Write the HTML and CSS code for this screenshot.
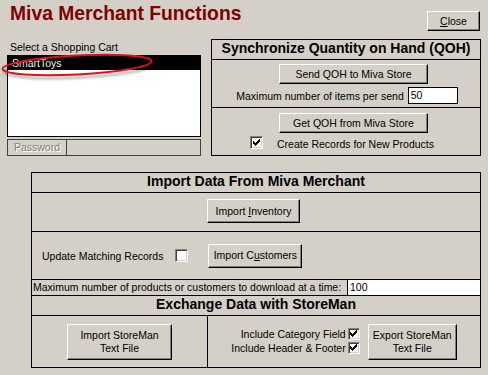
FILE: index.html
```html
<!DOCTYPE html>
<html>
<head>
<meta charset="utf-8">
<title>Miva Merchant Functions</title>
<link rel="stylesheet" href="styles.css">
</head>
<body>
<div class="win">
  <header class="top">
    <h1 class="title">Miva Merchant Functions</h1>
    <button class="btn close"><u>C</u>lose</button>
  </header>

  <div class="main">
    <div class="cart">
      <div class="cart-label">Select a Shopping Cart</div>
      <div class="listbox">
        <div class="item sel">SmartToys</div>
      </div>
      <div class="pwbar"><span class="pwlabel">Password</span><span class="pwfield"></span></div>
      <svg class="ring" width="170" height="36" viewBox="0 0 170 36">
        <defs><filter id="blur" x="-10%" y="-50%" width="120%" height="200%"><feGaussianBlur stdDeviation="1.3"/></filter></defs>
        <ellipse cx="79" cy="19" rx="74.5" ry="9.5" transform="rotate(-3 79 19)" fill="none" stroke="#000" stroke-opacity="0.28" stroke-width="2.5" filter="url(#blur)"/>
        <ellipse cx="77" cy="16" rx="74.5" ry="9.5" transform="rotate(-3 77 16)" fill="none" stroke="#e3101c" stroke-width="2"/>
      </svg>
    </div>

    <section class="sync">
      <div class="hdr">Synchronize Quantity on Hand (QOH)</div>
      <div class="sync-send">
        <button class="btn qoh">Send QOH to Miva Store</button>
        <div class="maxrow"><span>Maximum number of items per send</span><span class="field f50">50</span></div>
      </div>
      <div class="sync-get">
        <button class="btn qoh">Get QOH from Miva Store</button>
        <div class="chkrow">
          <span class="chk"><svg width="7" height="7" viewBox="0 0 7 7"><path d="M6 0H7V3H6V4H5V5H4V6H3V7H2V6H1V5H0V2H1V3H2V4H3V3H4V2H5V1H6Z"/></svg></span>
          <span class="chklabel">Create Records for New Products</span>
        </div>
      </div>
    </section>
  </div>

  <section class="import">
    <div class="hdr">Import Data From Miva Merchant</div>
    <div class="row-inv">
      <button class="btn imp-inv">Import <u>I</u>nventory</button>
    </div>
    <div class="row-cust">
      <span>Update Matching Records</span>
      <span class="chk"></span>
      <button class="btn imp-cust">Import C<u>u</u>stomers</button>
    </div>
    <div class="row-max">
      <span>Maximum number of products or customers to download at a time:</span>
      <span class="maxfield">100</span>
    </div>
    <div class="hdr">Exchange Data with StoreMan</div>
    <div class="xchg">
      <div class="xl">
        <button class="btn big imp-sm">Import StoreMan<br>Text File</button>
      </div>
      <div class="xr">
        <div class="opts">
          <div class="opt"><span>Include Category Field</span><span class="chk small"><svg width="7" height="7" viewBox="0 0 7 7"><path d="M6 0H7V3H6V4H5V5H4V6H3V7H2V6H1V5H0V2H1V3H2V4H3V3H4V2H5V1H6Z"/></svg></span></div>
          <div class="opt"><span>Include Header &amp; Footer</span><span class="chk small"><svg width="7" height="7" viewBox="0 0 7 7"><path d="M6 0H7V3H6V4H5V5H4V6H3V7H2V6H1V5H0V2H1V3H2V4H3V3H4V2H5V1H6Z"/></svg></span></div>
        </div>
        <button class="btn big exp-sm">Export StoreMan<br>Text File</button>
      </div>
    </div>
  </section>
</div>
</body>
</html>
```

FILE: styles.css
```css
* { box-sizing: border-box; }

body {
  margin: 0;
  background: #d4d0c8;
  font-family: "Liberation Sans", Arial, sans-serif;
  font-size: 10.5px;
  color: #000;
}

.win {
  width: 488px;
  height: 375px;
  overflow: hidden;
}

/* top bar */
.top {
  display: flex;
  justify-content: space-between;
  align-items: flex-start;
  height: 39px;
}

.title {
  margin: 3px 0 0 10px;
  font-size: 19.3px;
  line-height: 22px;
  font-weight: bold;
  color: #800000;
}

.btn {
  font-family: inherit;
  font-size: 10.5px;
  line-height: 13px;
  color: #000;
  background: #d4d0c8;
  border: 1px solid;
  border-color: #fff #000 #000 #fff;
  box-shadow: inset -1px -1px #808080;
  padding: 0;
  text-align: center;
}

.btn u { text-decoration: underline; text-underline-offset: 1px; }

.close {
  margin: 11px 8px 0 0;
  width: 53px;
  height: 20px;
}

/* main row */
.main {
  display: flex;
  gap: 10px;
  padding-left: 7px;
  height: 117px;
}

.cart {
  position: relative;
  width: 194px;
}

.cart-label {
  height: 16px;
  line-height: 16px;
  padding-left: 3px;
}

.listbox {
  height: 82px;
  background: #fff;
  border: 1px solid #000;
}

.item {
  height: 14px;
  line-height: 14px;
  padding-left: 4px;
}

.item.sel {
  background: #000;
  color: #fff;
}

.pwbar {
  display: flex;
  margin-top: 2px;
  height: 17px;
  border: 1px solid #404040;
}

.pwlabel {
  width: 59px;
  border-right: 1px solid #404040;
  text-align: center;
  line-height: 15px;
  color: #808080;
  text-shadow: 1px 1px #fff;
}

.ring {
  position: absolute;
  left: -7px;
  top: 10px;
  pointer-events: none;
}

/* sync box */
.sync {
  width: 270px;
  border: 1px solid #000;
  display: flex;
  flex-direction: column;
}

.hdr {
  height: 20px;
  border-bottom: 1px solid #000;
  text-align: center;
  font-weight: bold;
  font-size: 14px;
  line-height: 17px;
}

.sync-send {
  height: 48px;
  border-bottom: 1px solid #000;
  padding-top: 4px;
}

.qoh {
  display: block;
  margin-left: 67px;
  width: 149px;
  height: 20px;
}

.maxrow {
  display: flex;
  justify-content: center;
  align-items: center;
  gap: 4px;
  margin-top: 3px;
  padding-left: 2px;
}

.field {
  height: 17px;
  background: #fff;
  border: 1px solid #000;
  line-height: 15px;
  padding-left: 2px;
}

.f50 { width: 50px; }

.sync-get {
  padding-top: 5px;
}

.chkrow {
  display: flex;
  align-items: flex-start;
  margin-top: 3px;
  padding-left: 38px;
}

.chk {
  display: inline-flex;
  align-items: center;
  justify-content: center;
  flex: none;
  width: 13px;
  height: 13px;
  background: #fff;
  border: 1px solid;
  border-color: #808080 #fff #fff #808080;
  box-shadow: inset 1px 1px #404040, inset -1px -1px #d4d0c8;
}

.chk.small {
  width: 12px;
  height: 12px;
}

.chk svg { display: block; }

.chklabel {
  margin-left: 14px;
  line-height: 13px;
  padding-top: 2px;
}

/* import box */
.import {
  margin: 16px 8px 0 31px;
  width: 450px;
  height: 196px;
  border: 1px solid #000;
  display: flex;
  flex-direction: column;
}

.row-inv {
  height: 39px;
  border-bottom: 1px solid #000;
  padding: 6px 0 0 175px;
}

.imp-inv {
  width: 93px;
  height: 24px;
}

.row-cust {
  height: 48px;
  border-bottom: 1px solid #000;
  display: flex;
  align-items: center;
  padding-left: 10px;
}

.row-cust .chk {
  margin-left: 12px;
}

.imp-cust {
  margin-left: 20px;
  width: 94px;
  height: 24px;
}

.row-max {
  height: 16px;
  border-bottom: 1px solid #000;
  display: flex;
  line-height: 15px;
  padding-left: 1px;
}

.maxfield {
  margin-left: auto;
  width: 133px;
  background: #fff;
  border-left: 1px solid #000;
  padding-left: 2px;
}

.xchg {
  flex: 1;
  display: flex;
}

.xl {
  width: 176px;
  border-right: 1px solid #000;
  display: flex;
  align-items: center;
  justify-content: center;
}

.big {
  height: 36px;
}

.imp-sm { width: 105px; }

.xr {
  flex: 1;
  display: flex;
  align-items: center;
  justify-content: center;
}

.opts {
  display: flex;
  flex-direction: column;
  gap: 2px;
  margin-top: -2px;
}

.opt {
  display: flex;
  justify-content: flex-end;
  align-items: center;
  gap: 2px;
  line-height: 12px;
}

.exp-sm {
  margin-left: 8px;
  width: 89px;
}
```
